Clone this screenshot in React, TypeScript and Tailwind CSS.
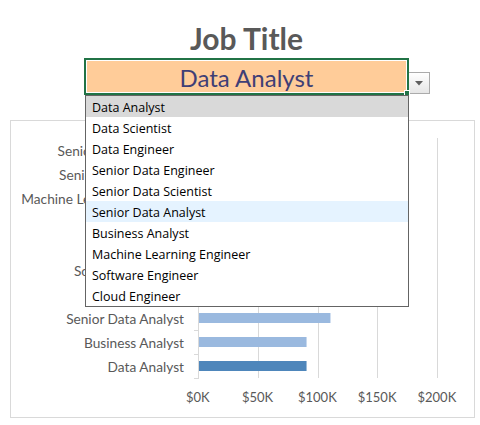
const jobs = [
  "Data Analyst",
  "Data Scientist",
  "Data Engineer",
  "Senior Data Engineer",
  "Senior Data Scientist",
  "Senior Data Analyst",
  "Business Analyst",
  "Machine Learning Engineer",
  "Software Engineer",
  "Cloud Engineer",
];

// chart rows, top to bottom (salary in $K)
const rows = [
  { name: "Senior Data Engineer", value: 145 },
  { name: "Senior Data Scientist", value: 140 },
  { name: "Machine Learning Engineer", value: 135 },
  { name: "Cloud Engineer", value: 125 },
  { name: "Data Engineer", value: 120 },
  { name: "Software Engineer", value: 115 },
  { name: "Data Scientist", value: 112 },
  { name: "Senior Data Analyst", value: 110 },
  { name: "Business Analyst", value: 90 },
  { name: "Data Analyst", value: 90 },
];

const ticks = ["$0K", "$50K", "$100K", "$150K", "$200K"];

function SalaryChart({ selected }: { selected: string }) {
  return (
    <div className="ml-[10px] mt-[25px] h-[298px] w-[465px] border border-[#d9d9d9] pt-[17px] font-['Lato',sans-serif] text-[13px] text-[#595959]">
      <div className="flex">
        <div className="flex w-[173px] flex-col text-[13.7px]">
          {rows.map((r) => (
            <div key={r.name} className="flex h-[24px] items-center justify-end whitespace-nowrap pt-[2px] leading-none">
              {r.name}
            </div>
          ))}
        </div>
        <svg width="246" height="241" className="ml-[10px]">
          {[64.5, 124.5, 183.5, 243.5].map((x) => (
            <line key={x} x1={x} x2={x} y1={0} y2={240} stroke="#d9d9d9" />
          ))}
          <line x1={4.5} x2={4.5} y1={0} y2={241} stroke="#d9d9d9" />
          {Array.from({ length: 11 }, (_, i) => (
            <line key={i} x1={0} x2={5} y1={24 * i + 0.5} y2={24 * i + 0.5} stroke="#d9d9d9" />
          ))}
          {rows.map((r, i) => (
            <rect
              key={r.name}
              x={5}
              y={24 * i + 7}
              width={r.value * 1.195}
              height={10}
              fill={r.name === selected ? "#4e86bb" : "#9ab9df"}
            />
          ))}
        </svg>
      </div>
      <div className="ml-[157px] mt-[10px] grid grid-cols-[repeat(5,59.75px)] leading-[16px]">
        {ticks.map((t) => (
          <div key={t} className="text-center">
            {t}
          </div>
        ))}
      </div>
    </div>
  );
}

export default function App() {
  const selected = "Data Analyst";
  const hovered = "Senior Data Analyst";

  return (
    <div className="relative h-[425px] w-[480px] overflow-hidden bg-white">
      <div className="pl-[84px]">
        <h1 className="h-[58px] w-[325px] pt-[22px] text-center font-['Lato',sans-serif] text-[30px] font-bold leading-[32px] text-[#595959]">
          Job Title
        </h1>
        <div className="flex items-start">
          <div className="relative h-[37px] w-[325px] border-2 border-[#217346]">
            <div className="flex h-full items-center justify-center border border-white bg-[#ffcc99] pt-[3px] font-['Lato',sans-serif] text-[24px] leading-none text-[#3f3f76]">
              {selected}
            </div>
            <div className="absolute -bottom-[3px] -right-[3px] h-[6px] w-[6px] border border-white bg-[#217346]" />
          </div>
          <button className="-ml-[1px] mt-[14px] flex h-[22px] w-[22px] items-center justify-center border border-[#ababab] bg-gradient-to-b from-white to-[#e6e6e6]">
            <svg width="8" height="5" viewBox="0 0 8 5">
              <path d="M0 0h8L4 4.5z" fill="#5f5f5f" />
            </svg>
          </button>
        </div>
      </div>

      <SalaryChart selected={selected} />

      <ul className="absolute left-[85px] top-[95px] w-[324px] border border-[#646464] bg-white font-['Open_Sans',sans-serif] text-[12.5px] text-black">
        {jobs.map((j) => (
          <li
            key={j}
            className={
              "flex h-[21px] items-center whitespace-nowrap pl-[6px] pt-[3px] " +
              (j === selected ? "bg-[#d9d9d9]" : j === hovered ? "bg-[#e5f3ff]" : "")
            }
          >
            {j}
          </li>
        ))}
      </ul>
    </div>
  );
}
